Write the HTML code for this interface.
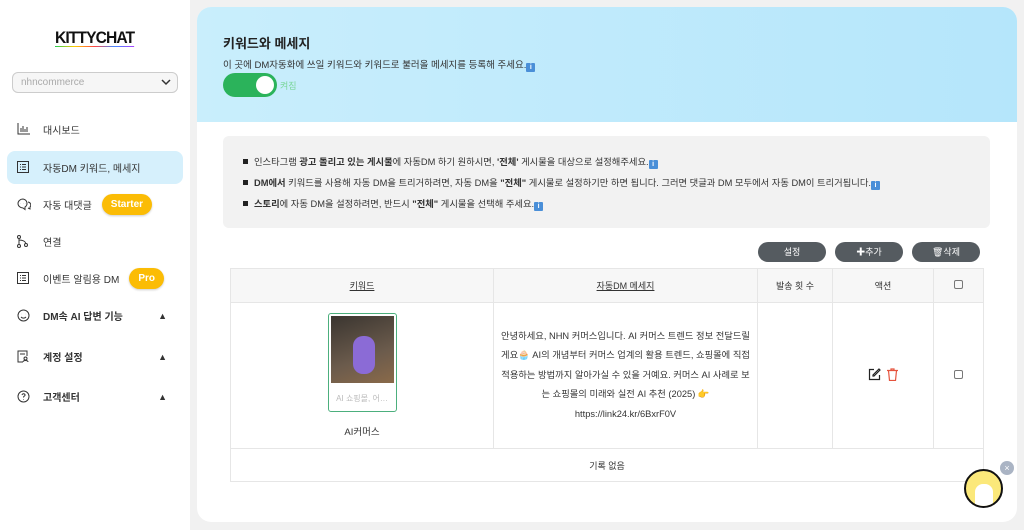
<!DOCTYPE html>
<html><head><meta charset="utf-8"><style>
*{box-sizing:border-box;margin:0;padding:0}
body{width:1024px;height:530px;overflow:hidden;background:#f1f1f1;font-family:"Liberation Sans","Noto Sans CJK KR",sans-serif;color:#222;position:relative}
.side{position:absolute;left:0;top:0;width:190px;height:530px;background:#fff}
.logo{position:absolute;left:55px;top:28px;font-weight:900;font-size:17px;letter-spacing:-1px;color:#111;transform:scaleX(.92);transform-origin:left}
.logo:after{content:"";position:absolute;left:0;right:0;bottom:1px;height:1px;background:linear-gradient(90deg,#2c5,#fc0,#f44,#48f,#a4f)}
.sel{position:absolute;left:12px;top:72px;width:166px;height:21px;border:1px solid #ccc;border-radius:6px;background:#f6f6f6;font-size:10px;color:#aaa;padding:4px 8px}
.sel svg{position:absolute;right:6px;top:6px}
.nav{position:absolute;left:7px;width:176px;height:33px;font-size:10px;display:flex;align-items:center;padding-left:36px;color:#333}
.nav svg{position:absolute;left:10px;top:10px}
.nav.act{background:#d6f0fc;border-radius:8px}
.nav b{font-weight:700}
.badge{margin-left:10px;background:#fbbc05;color:#fff;font-weight:700;font-size:10px;border-radius:11px;padding:5px 9px;box-shadow:0 1px 2px rgba(0,0,0,.2)}
.car{position:absolute;right:16px;top:12px;font-size:9px}
.main{position:absolute;left:197px;top:7px;width:820px;height:515px;background:#fff;border-radius:14px;overflow:hidden}
.hd{height:115px;background:linear-gradient(90deg,#c9eefc,#b5e6fb);padding:26px 26px}
.hd h1{font-size:13px;font-weight:700;margin-bottom:5px}
.hd p{font-size:9.5px;color:#333}
.ii{display:inline-block;width:9px;height:9px;background:#4a8fd8;color:#fff;font-size:7px;text-align:center;line-height:9px;border-radius:1px;vertical-align:-1px;font-weight:700}
.tog{margin-top:1px;display:flex;align-items:center}
.tg{width:54px;height:24px;border-radius:12px;background:#2bb35b;position:relative}
.tg:after{content:"";position:absolute;right:3px;top:3px;width:18px;height:18px;border-radius:50%;background:#fff}
.tog span{font-size:9px;color:#7bd69b;margin-left:3px}
.note{position:absolute;left:26px;top:129px;width:767px;height:92px;background:#f2f2f2;border-radius:6px;padding:18px 20px;font-size:9.3px;color:#333}
.note div{margin-bottom:6px}
.note div:before{content:"";display:inline-block;width:5px;height:5px;background:#222;margin-right:6px;vertical-align:1px}
.btn{position:absolute;top:235px;height:20px;width:68px;border-radius:10px;background:#555b60;color:#fff;font-size:9px;text-align:center;line-height:20px}
table{position:absolute;left:33px;top:261px;width:754px;border-collapse:collapse;font-size:9px;color:#333}
td,th{border:1px solid #e6e6e6;text-align:center;font-weight:400}
th{height:34px;background:#f7f7f7}
.cb{display:inline-block;width:9px;height:9px;border:1px solid #777;border-radius:2px}
.thumb{width:69px;height:99px;border:1px solid #4caf7d;border-radius:3px;margin:0 auto;padding:2px}
.img{height:67px;background:linear-gradient(160deg,#3a3530,#6b5b4c 60%,#8a6a4a);position:relative}
.img:after{content:"";position:absolute;left:22px;top:20px;width:22px;height:38px;background:#8b6bd6;border-radius:10px}
.cap{font-size:8px;color:#bbb;margin-top:10px}
.msg{line-height:19.5px;font-size:9.3px;padding:0 4px}
.cat{position:absolute;left:964px;top:469px;width:39px;height:39px;border-radius:50%;background:#fbe87a;border:2px solid #111;overflow:hidden}
.cat:after{content:"";position:absolute;left:9px;top:13px;width:18px;height:22px;background:#fff;border-radius:8px 8px 2px 2px}
.x{position:absolute;left:1000px;top:461px;width:14px;height:14px;border-radius:50%;background:#aab4c4;color:#fff;font-size:9px;text-align:center;line-height:14px}
</style></head><body>
<div class="side">
<div class="logo">KITTYCHAT</div>
<div class="sel">nhncommerce<svg width="10" height="7" viewBox="0 0 10 7"><path d="M1 1l4 4 4-4" stroke="#333" stroke-width="1.5" fill="none"/></svg></div>
<div class="nav" style="top:113px"><svg width="13" height="12" viewBox="0 0 13 12" fill="none" stroke="#333"><path d="M1 0v11h12M4 9V5M6 9V3M8 9V6M10 9V4"/></svg>대시보드</div>
<div class="nav act" style="top:151px"><svg width="12" height="12" viewBox="0 0 12 12" fill="none" stroke="#333"><rect x=".5" y=".5" width="11" height="11"/><path d="M3 3.5h1M5 3.5h4M3 6h1M5 6h4M3 8.5h1M5 8.5h4"/></svg>자동DM 키워드, 메세지</div>
<div class="nav" style="top:188px"><svg width="14" height="13" viewBox="0 0 14 13" fill="none" stroke="#333"><path d="M6 1a5 4.5 0 100 9l2 1.5V9A5 4.5 0 006 1z"/><path d="M11 4a3 3 0 012 5v2l-2-1" /><path d="M3.5 5.5h.1M6 5.5h.1M8.5 5.5h.1"/></svg>자동 대댓글<span class="badge">Starter</span></div>
<div class="nav" style="top:225px"><svg width="12" height="13" viewBox="0 0 12 13" fill="none" stroke="#333"><circle cx="2" cy="2" r="1.5"/><circle cx="2" cy="11" r="1.5"/><circle cx="9" cy="10" r="1.5"/><path d="M2 3.5v6M2 5c3 0 6 1 7 3.5"/></svg>연결</div>
<div class="nav" style="top:262px"><svg width="12" height="12" viewBox="0 0 12 12" fill="none" stroke="#333"><rect x=".5" y=".5" width="11" height="11"/><path d="M3 3.5h1M5 3.5h4M3 6h1M5 6h4M3 8.5h1M5 8.5h4"/></svg>이벤트 알림용 DM<span class="badge">Pro</span></div>
<div class="nav" style="top:299px"><svg width="13" height="13" viewBox="0 0 13 13" fill="none" stroke="#333"><circle cx="6.5" cy="6.5" r="5.5"/><path d="M4 8c1.5 1.5 3.5 1.5 5 0M4.5 5h.1M8.5 5h.1"/></svg><b>DM속 AI 답변 기능</b><span class="car">▲</span></div>
<div class="nav" style="top:340px"><svg width="12" height="13" viewBox="0 0 12 13" fill="none" stroke="#333"><path d="M6 12H1V1h9v5"/><circle cx="8.5" cy="8.5" r="1.5"/><path d="M6 12c0-2 5-2 5 0M3 4h5"/></svg><b>계정 설정</b><span class="car">▲</span></div>
<div class="nav" style="top:380px"><svg width="13" height="13" viewBox="0 0 13 13" fill="none" stroke="#333"><circle cx="6.5" cy="6.5" r="5.5"/><path d="M5 5a1.5 1.5 0 113 .5c-.8.5-1.5.8-1.5 2M6.5 9.5v.5"/></svg><b>고객센터</b><span class="car">▲</span></div>
</div>
<div class="main">
<div class="hd"><h1>키워드와 메세지</h1><p>이 곳에 DM자동화에 쓰일 키워드와 키워드로 불러올 메세지를 등록해 주세요.<span class="ii">i</span></p>
<div class="tog"><div class="tg"></div><span>켜짐</span></div></div>
<div class="note">
<div>인스타그램 <b>광고 돌리고 있는 게시물</b>에 자동DM 하기 원하시면, <b>'전체'</b> 게시물을 대상으로 설정해주세요.<span class="ii">i</span></div>
<div><b>DM에서</b> 키워드를 사용해 자동 DM을 트리거하려면, 자동 DM을 <b>"전체"</b> 게시물로 설정하기만 하면 됩니다. 그러면 댓글과 DM 모두에서 자동 DM이 트리거됩니다.<span class="ii">i</span></div>
<div><b>스토리</b>에 자동 DM을 설정하려면, 반드시 <b>"전체"</b> 게시물을 선택해 주세요.<span class="ii">i</span></div>
</div>
<div class="btn" style="left:561px">설정</div>
<div class="btn" style="left:638px">✚추가</div>
<div class="btn" style="left:715px">🗑삭제</div>
<table>
<tr><th style="width:263px"><u>키워드</u></th><th style="width:264px"><u>자동DM 메세지</u></th><th style="width:75px">발송 횟 수</th><th style="width:101px">액션</th><th><span class="cb"></span></th></tr>
<tr style="height:146px"><td><div class="thumb"><div class="img"></div><div class="cap">AI 쇼핑몰, 어…</div></div><div style="margin-top:12px;font-size:9.5px">AI커머스</div></td>
<td class="msg">안녕하세요, NHN 커머스입니다. AI 커머스 트렌드 정보 전달드릴게요🧁 AI의 개념부터 커머스 업계의 활용 트렌드, 쇼핑몰에 직접 적용하는 방법까지 알아가실 수 있을 거예요. 커머스 AI 사례로 보는 쇼핑몰의 미래와 실전 AI 추천 (2025) 👉 https://link24.kr/6BxrF0V</td>
<td></td>
<td><svg width="13" height="13" viewBox="0 0 13 13" fill="none" stroke="#222" stroke-width="1.2"><path d="M6 1.5H1.5v10h10V7"/><path d="M11 1l1 1-6 6H5V7z"/></svg>&nbsp;&nbsp;<svg width="11" height="13" viewBox="0 0 11 13" fill="none" stroke="#e5533d" stroke-width="1.2"><path d="M0 2.5h11M4 2.5V1h3v1.5M1.5 2.5l1 10h6l1-10"/></svg></td>
<td><span class="cb"></span></td></tr>
<tr style="height:33px"><td colspan="5">기록 없음</td></tr>
</table>
</div>
<div class="cat"></div><div class="x">×</div>
</body></html>
